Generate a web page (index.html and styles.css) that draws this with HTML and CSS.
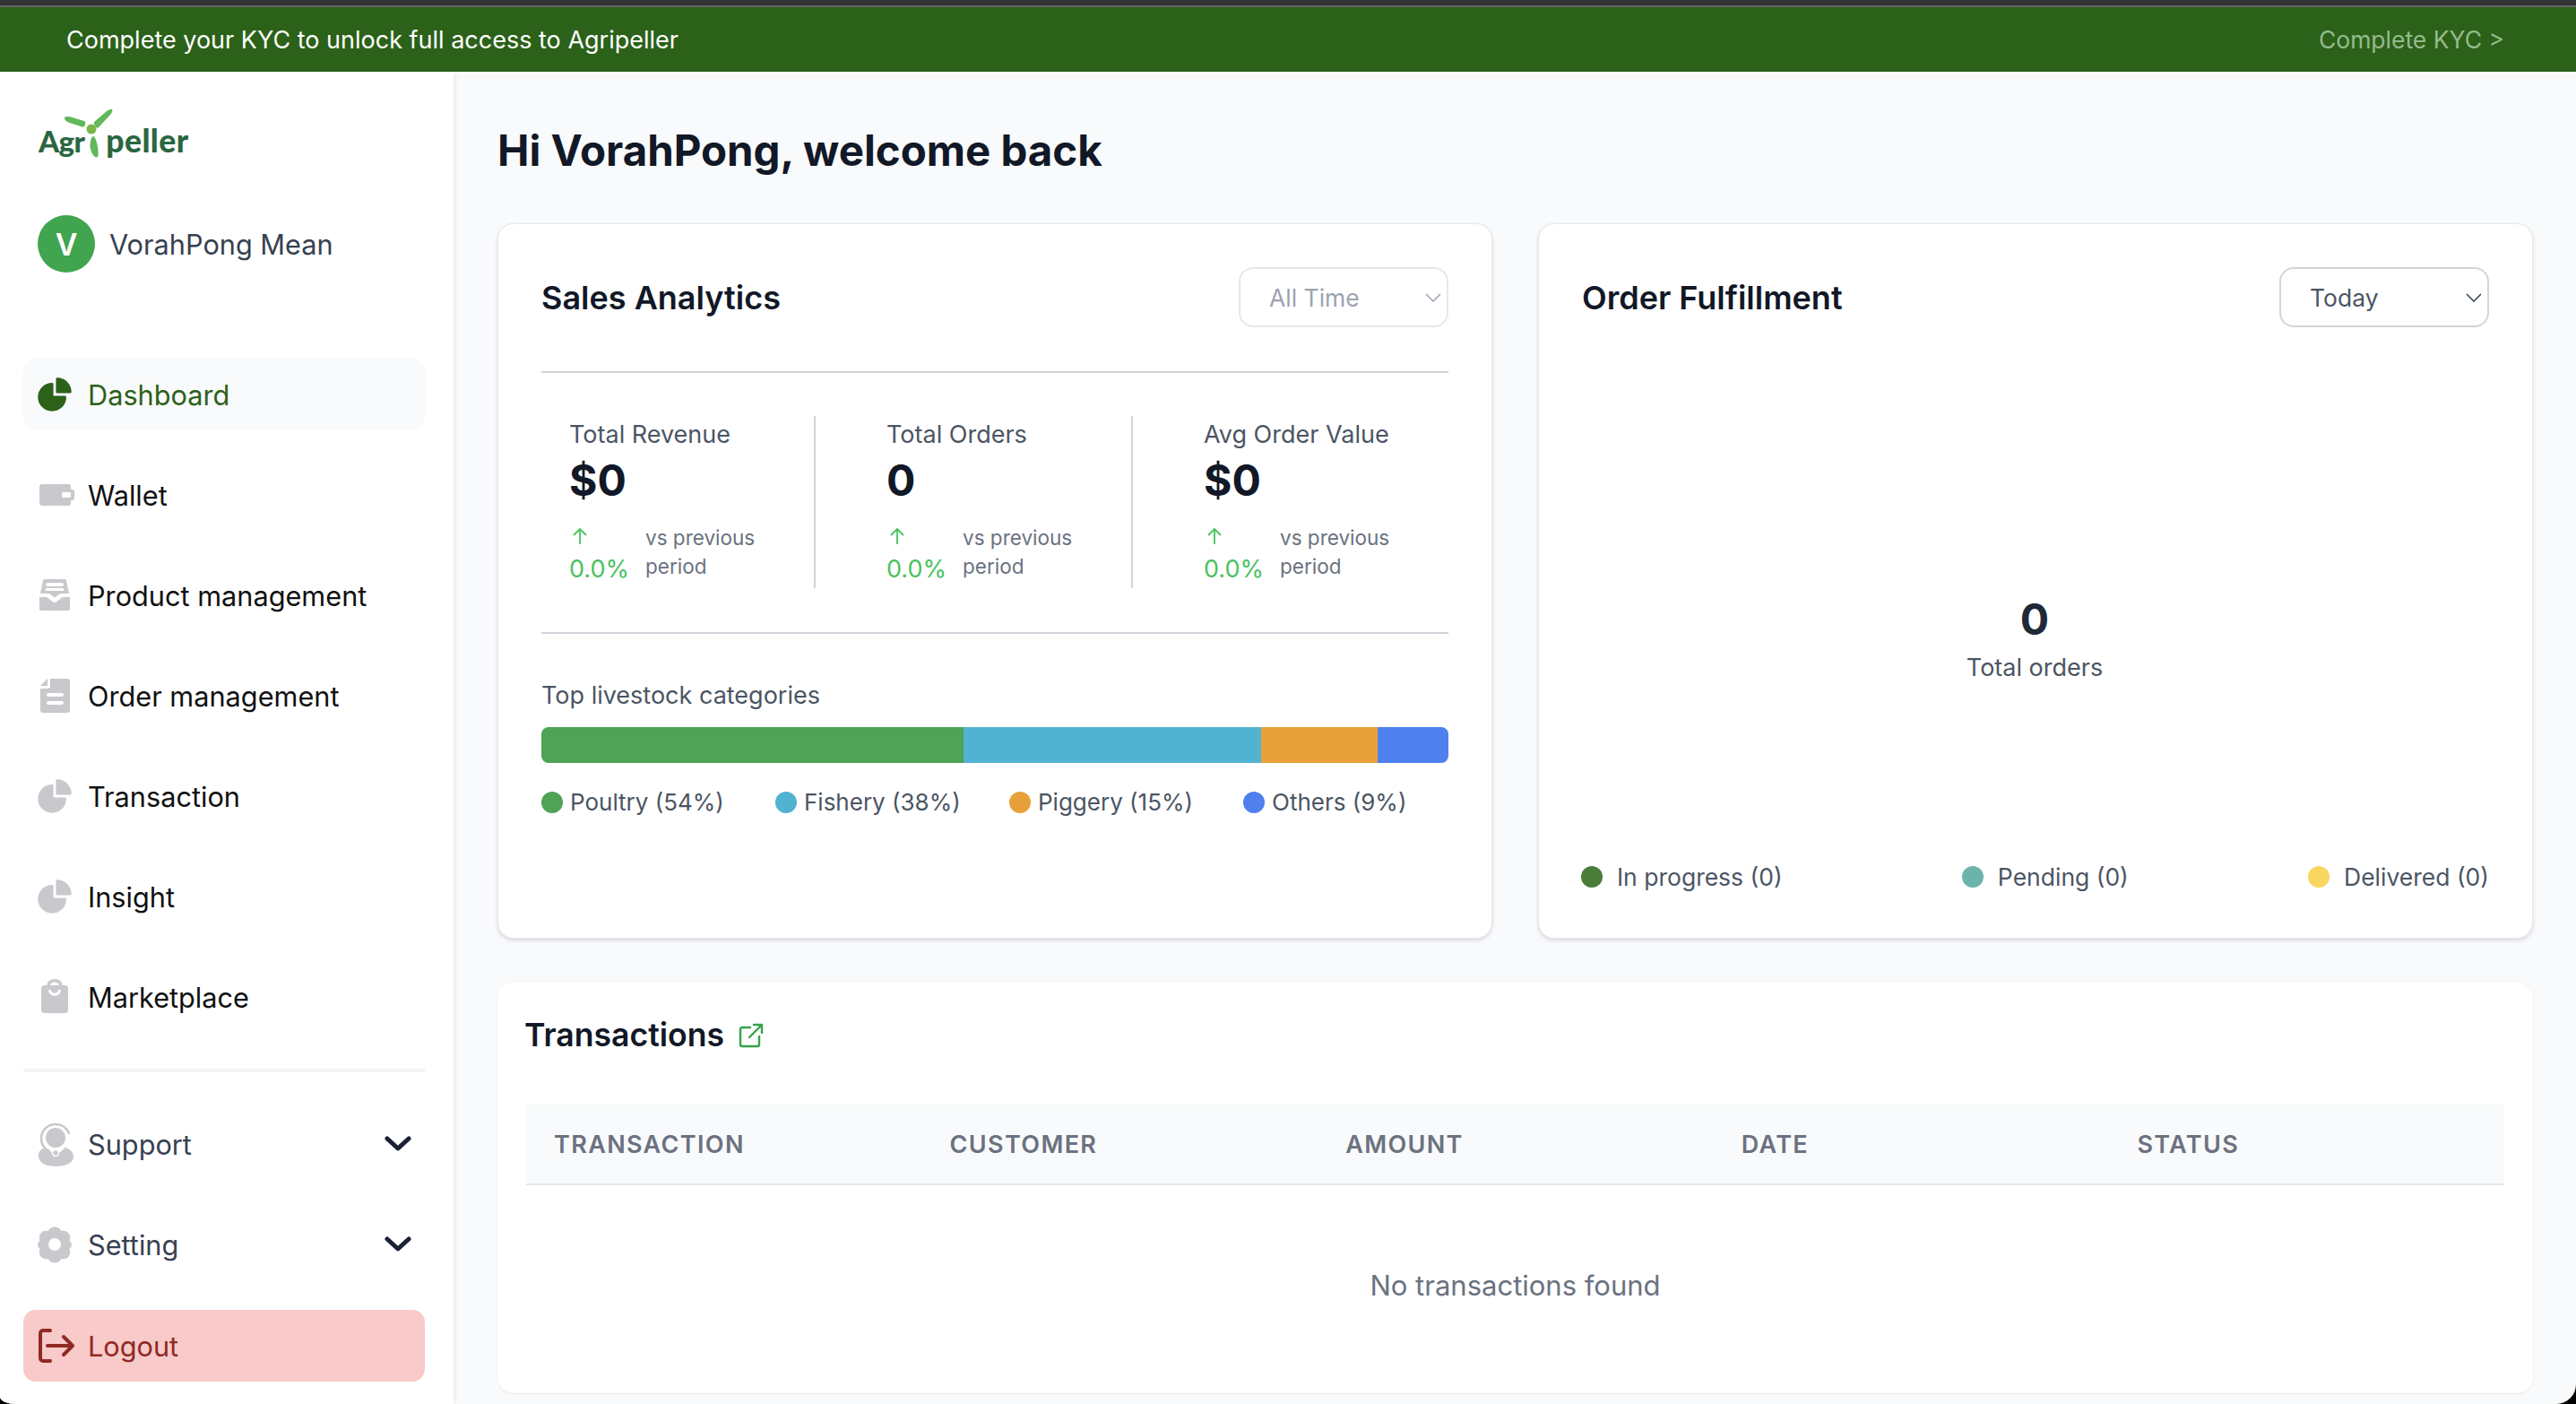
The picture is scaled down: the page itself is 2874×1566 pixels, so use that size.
FILE: index.html
```html
<!DOCTYPE html>
<html lang="en">
<head>
<meta charset="utf-8">
<title>Agripeller Dashboard</title>
<link rel="stylesheet" href="styles.css">
</head>
<body>
<div class="app">
  <div class="chrome"></div>
  <div class="banner">
    <span>Complete your KYC to unlock full access to Agripeller</span>
    <span class="banner-link">Complete KYC &gt;</span>
  </div>
  <div class="layout">
    <aside class="sidebar">
      <div class="logo">
        <span class="logo-start">Agr</span><span class="logo-gap"></span><span>peller</span>
        <svg class="logo-mill" width="70" height="64" viewBox="0 0 70 64">
          <path d="M5 14.500C4 12 8 11.500 12 12.500L27 17C28 17 28.500 18 28 21C27 23.500 26 24 24.500 23.500L11 19C8 18 6 17 5 14.500Z" fill="#62b85a"/>
          <path d="M38 18L52 6C54 4.500 57 3 58 4C59 5 58 8 56 10L43 24C42 25 41 25 40 23.500C38.500 21.500 37 19.500 38 18Z" fill="#62b85a"/>
          <path d="M37 34C39 34 41 40 42 46C43 52 43 57 41 57.500C38 58 34.500 52 33.500 46C33 41 35 34 37 34Z" fill="#62b85a"/>
          <circle cx="35" cy="26" r="5.500" fill="#7ab648"/>
        </svg>
      </div>
      <div class="user">
        <div class="avatar">V</div>
        <span class="user-name">VorahPong Mean</span>
      </div>
      <nav class="nav">
        <a class="nav-item active">
          <svg class="nav-icon" viewBox="0 0 24 24"><path d="M2.250 13.500a8.250 8.250 0 0 1 8.250-8.250.75.75 0 0 1 .75.75v6.750H18a.75.75 0 0 1 .75.75 8.250 8.250 0 0 1-16.500 0Z"/><path d="M12.750 3a.75.75 0 0 1 .75-.75 8.250 8.250 0 0 1 8.250 8.250.75.75 0 0 1-.75.75h-7.500a.75.75 0 0 1-.75-.75V3Z"/></svg>
          <span>Dashboard</span>
        </a>
        <a class="nav-item">
          <svg class="nav-icon" viewBox="0 0 46 46"><path fill-rule="evenodd" d="M9 11h29a3 3 0 0 1 3 3v3h1a3 3 0 0 1 3 3v6a3 3 0 0 1-3 3h-1v3a3 3 0 0 1-3 3H9a3 3 0 0 1-3-3V14a3 3 0 0 1 3-3ZM32 20a1 1 0 0 0-1 1v4a1 1 0 0 0 1 1h8a1 1 0 0 0 1-1v-4a1 1 0 0 0-1-1Z"/></svg>
          <span>Wallet</span>
        </a>
        <a class="nav-item">
          <svg class="nav-icon" viewBox="0 0 46 46"><path fill-rule="evenodd" d="M12 5h22a2 2 0 0 1 2 1.500L39 21h-9c-1 0-2 .5-3 1.500l-4 3-4-3c-1-1-2-1.500-3-1.500H7L10 6.500A2 2 0 0 1 12 5ZM15 9a2 2 0 0 0 0 4h16a2 2 0 0 0 0-4ZM14 15a1.500 1.500 0 0 0 0 3h18a1.500 1.500 0 0 0 0-3Z"/><path d="M6 25h8l8 6h2l8-6h8v13a2 2 0 0 1-2 2H8a2 2 0 0 1-2-2Z"/></svg>
          <span>Product management</span>
        </a>
        <a class="nav-item">
          <svg class="nav-icon" viewBox="0 0 46 46"><path d="M7 12L15 4v8Z"/><path fill-rule="evenodd" d="M18 4h19a3 3 0 0 1 3 3v32a3 3 0 0 1-3 3H10a3 3 0 0 1-3-3V15h8a3 3 0 0 0 3-3ZM16 20a2 2 0 0 0 0 4h15a2 2 0 0 0 0-4ZM16 29a2 2 0 0 0 0 4h15a2 2 0 0 0 0-4Z"/></svg>
          <span>Order management</span>
        </a>
        <a class="nav-item">
          <svg class="nav-icon" viewBox="0 0 24 24"><path d="M2.250 13.500a8.250 8.250 0 0 1 8.250-8.250.75.75 0 0 1 .75.75v6.750H18a.75.75 0 0 1 .75.75 8.250 8.250 0 0 1-16.500 0Z"/><path d="M12.750 3a.75.75 0 0 1 .75-.75 8.250 8.250 0 0 1 8.250 8.250.75.75 0 0 1-.75.75h-7.500a.75.75 0 0 1-.75-.75V3Z"/></svg>
          <span>Transaction</span>
        </a>
        <a class="nav-item">
          <svg class="nav-icon" viewBox="0 0 24 24"><path d="M2.250 13.500a8.250 8.250 0 0 1 8.250-8.250.75.75 0 0 1 .75.75v6.750H18a.75.75 0 0 1 .75.75 8.250 8.250 0 0 1-16.500 0Z"/><path d="M12.750 3a.75.75 0 0 1 .75-.75 8.250 8.250 0 0 1 8.250 8.250.75.75 0 0 1-.75.75h-7.500a.75.75 0 0 1-.75-.75V3Z"/></svg>
          <span>Insight</span>
        </a>
        <a class="nav-item">
          <svg class="nav-icon" viewBox="0 0 46 46"><path fill-rule="evenodd" d="M12 10h2.500C15 5 18.500 3 23 3s8 2 8.500 7H34a4 4 0 0 1 4 4v23a4 4 0 0 1-4 4H12a4 4 0 0 1-4-4V14a4 4 0 0 1 4-4ZM18 10h10c-.5-2.500-2.500-3.500-5-3.500s-4.500 1-5 3.500ZM16 15c0 9 14 9 14 0h-3c-.5 5-7.500 5-8 0Z"/></svg>
          <span>Marketplace</span>
        </a>
      </nav>
      <div class="side-rule"></div>
      <nav class="nav">
        <a class="nav-item muted">
          <svg class="nav-icon tall" viewBox="0 0 46 54"><path fill="none" stroke="#c8c8cd" stroke-width="2.500" stroke-linecap="round" d="M39 15C36 8 31 5 24 5C15 5 8 12 8 21C8 27 11 32 17 35"/><circle cx="24" cy="20" r="11"/><path d="M5 40C5 35 8 32 13 31C16 35 20 37 24 37C28 37 31 36 34 31C40 32 44 36 44 41C44 48 35 52 24 52C13 52 5 48 5 40Z"/><circle cx="24" cy="37" r="3.500" stroke="#fff" stroke-width="1.500"/></svg>
          <span>Support</span>
          <svg class="chev" width="30" height="18" viewBox="0 0 30 18"><path d="M3 3l12 11L27 3" fill="none" stroke="#1a2233" stroke-width="5" stroke-linecap="round" stroke-linejoin="round"/></svg>
        </a>
        <a class="nav-item muted">
          <svg class="nav-icon" viewBox="0 0 46 46"><path fill-rule="evenodd" d="M23 3.500c3.500 0 6 2 7.500 4.500 3-.5 6 0 8 2.500s2 5.500 1 8.500c2 2 2.500 3 2.500 4.500s-.5 2.500-2.500 4.500c1 3 1 6-1 8.500s-5 3-8 2.500c-1.500 2.500-4 4.500-7.500 4.500s-6-2-7.500-4.500c-3 .5-6 0-8-2.500s-2-5.500-1-8.500C4.500 26 4 25 4 23.500s.5-2.500 2.500-4.500c-1-3-1-6 1-8.500s5-3 8-2.500c1.500-2.500 4-4.500 7.500-4.500ZM23 16a7 7 0 1 0 0 14 7 7 0 0 0 0-14Z"/></svg>
          <span>Setting</span>
          <svg class="chev" width="30" height="18" viewBox="0 0 30 18"><path d="M3 3l12 11L27 3" fill="none" stroke="#1a2233" stroke-width="5" stroke-linecap="round" stroke-linejoin="round"/></svg>
        </a>
        <a class="nav-item logout">
          <svg class="nav-icon" viewBox="0 0 46 46"><path d="M18 6H10a3 3 0 0 0-3 3v28a3 3 0 0 0 3 3h8M15 23h28M33 13l10 10-10 10" fill="none" stroke="#8f2a24" stroke-width="4" stroke-linecap="round" stroke-linejoin="round"/></svg>
          <span>Logout</span>
        </a>
      </nav>
    </aside>
    <main class="main">
      <h1 class="greeting">Hi VorahPong, welcome back</h1>
      <div class="cards">
        <section class="card">
          <header class="card-head ruled">
            <h2 class="card-title">Sales Analytics</h2>
            <div class="select disabled"><span>All Time</span><svg width="18" height="10" viewBox="0 0 18 10"><path d="M1 1l8 8 8-8" fill="none" stroke="#9ca3af" stroke-width="1.500"/></svg></div>
          </header>
          <div class="stats">
            <div class="stat">
              <div class="stat-label">Total Revenue</div>
              <div class="stat-value">$0</div>
              <div class="stat-change">
                <div class="change-num">
                  <svg width="18" height="20" viewBox="0 0 18 20"><path d="M9 19V2M2 9l7-7 7 7" fill="none" stroke="#4ac25f" stroke-width="1.800"/></svg>
                  <span>0.0%</span>
                </div>
                <span class="change-note">vs previous period</span>
              </div>
            </div>
            <div class="stat">
              <div class="stat-label">Total Orders</div>
              <div class="stat-value">0</div>
              <div class="stat-change">
                <div class="change-num">
                  <svg width="18" height="20" viewBox="0 0 18 20"><path d="M9 19V2M2 9l7-7 7 7" fill="none" stroke="#4ac25f" stroke-width="1.800"/></svg>
                  <span>0.0%</span>
                </div>
                <span class="change-note">vs previous period</span>
              </div>
            </div>
            <div class="stat">
              <div class="stat-label">Avg Order Value</div>
              <div class="stat-value">$0</div>
              <div class="stat-change">
                <div class="change-num">
                  <svg width="18" height="20" viewBox="0 0 18 20"><path d="M9 19V2M2 9l7-7 7 7" fill="none" stroke="#4ac25f" stroke-width="1.800"/></svg>
                  <span>0.0%</span>
                </div>
                <span class="change-note">vs previous period</span>
              </div>
            </div>
          </div>
          <div class="categories">
            <div class="cat-title">Top livestock categories</div>
            <div class="bar">
              <div class="seg c-green" style="width:471px"></div>
              <div class="seg c-cyan" style="width:332px"></div>
              <div class="seg c-orange" style="width:130px"></div>
              <div class="seg c-blue" style="width:79px"></div>
            </div>
            <ul class="legend">
              <li><i class="dot c-green"></i>Poultry (54%)</li>
              <li><i class="dot c-cyan"></i>Fishery (38%)</li>
              <li><i class="dot c-orange"></i>Piggery (15%)</li>
              <li><i class="dot c-blue"></i>Others (9%)</li>
            </ul>
          </div>
        </section>
        <section class="card">
          <header class="card-head">
            <h2 class="card-title">Order Fulfillment</h2>
            <div class="select"><span>Today</span><svg width="18" height="10" viewBox="0 0 18 10"><path d="M1 1l8 8 8-8" fill="none" stroke="#374151" stroke-width="1.500"/></svg></div>
          </header>
          <div class="orders">
            <div class="orders-num">0</div>
            <div class="orders-label">Total orders</div>
          </div>
          <ul class="order-legend">
            <li><i class="dot c-moss"></i>In progress (0)</li>
            <li><i class="dot c-teal"></i>Pending (0)</li>
            <li><i class="dot c-yellow"></i>Delivered (0)</li>
          </ul>
        </section>
      </div>
      <section class="card-flat">
        <div class="tx-head">
          <h2 class="card-title">Transactions</h2>
          <svg width="28" height="28" viewBox="0 0 28 28"><path d="M13 5H4a2 2 0 0 0-2 2v17a2 2 0 0 0 2 2h17a2 2 0 0 0 2-2v-9M12 16L26 2M17 2h9v9" fill="none" stroke="#37a34a" stroke-width="2.400" stroke-linecap="round" stroke-linejoin="round"/></svg>
        </div>
        <div class="table-head">
          <div>Transaction</div><div>Customer</div><div>Amount</div><div>Date</div><div>Status</div>
        </div>
        <div class="empty">No transactions found</div>
      </section>
    </main>
  </div>
</div>
</body>
</html>
```

FILE: styles.css
```css
* { box-sizing: border-box; margin: 0; padding: 0; }
html, body { width: 2874px; height: 1566px; overflow: hidden; background: #000; }
body { font-family: Inter, "Liberation Sans", sans-serif; color: #111827; }
.app { width: 2874px; height: 1566px; display: flex; flex-direction: column; overflow: hidden; background: #f9fafb; border-radius: 0 0 22px 18px / 0 0 22px 8px; }
.chrome { height: 8px; flex: none; background: #333; border-bottom: 2px solid #666; }
.banner { height: 72px; flex: none; display: flex; align-items: center; justify-content: space-between; padding: 0 80px 0 74px; background: #2b6119; color: #fff; font-size: 27px; }
.banner-link { color: #96ba8b; font-size: 26.500px; }
.layout { flex: 1; display: flex; min-height: 0; }
.sidebar { width: 506px; flex: none; background: #fff; padding: 40px 32px 0 26px; box-shadow: 2px 0 4px rgba(17,24,39,.06); position: relative; }
.logo { position: relative; height: 59px; display: flex; align-items: flex-end; padding-left: 17px; font-family: Lato, sans-serif; font-weight: 900; font-size: 35.500px; line-height: 44px; letter-spacing: .4px; color: #2a6640; margin-bottom: -3px; }
.logo-start { font-size: 33px; letter-spacing: -.6px; }
.logo-gap { width: 24px; }
.logo-mill { position: absolute; left: 41px; top: -2px; }
.user { display: flex; align-items: center; gap: 16px; margin: 64px 0 0 16px; }
.avatar { width: 64px; height: 64px; border-radius: 50%; background: #41a44f; color: #fff; display: flex; align-items: center; justify-content: center; font-size: 34px; font-weight: 600; }
.user-name { font-size: 30.700px; color: #374151; }
.nav { display: flex; flex-direction: column; gap: 32px; }
.user + .nav { margin-top: 96px; }
.nav-item { height: 80px; display: flex; align-items: center; gap: 14px; padding: 0 12px; border-radius: 14px; font-size: 30.700px; color: #111; }
.nav-icon { width: 46px; height: 46px; flex: none; fill: #c8c8cd; }
.nav-icon.tall { height: 54px; }
.nav-item.active { background: #f9fafb; color: #2b6119; }
.nav-item.active .nav-icon { fill: #2b6119; }
.nav-item.muted { color: #374151; }
.chev { margin-left: auto; margin-right: 3px; }
.nav-item.logout { background: #f8caca; color: #8f2a24; margin-top: 1px; }
.side-rule { height: 4px; background: #f3f4f6; margin: 40px 0; }
.main { flex: 1; min-width: 0; padding: 56px 48px 0 49px; overflow: hidden; }
.greeting { font-size: 47.400px; line-height: 64px; font-weight: 700; color: #111827; margin-bottom: 49px; }
.cards { display: grid; grid-template-columns: 1110px 1110px; justify-content: space-between; }
.card { height: 798px; background: #fff; border: 1px solid #e5e7eb; border-radius: 18px; padding: 48px 48px 0; box-shadow: 0 2px 4px rgba(17,24,39,.14); display: flex; flex-direction: column; }
.card-head { display: flex; align-items: center; justify-content: space-between; flex: none; }
.card-head.ruled { padding-bottom: 49px; border-bottom: 2px solid #d1d5db; }
.card-title { font-size: 36px; font-weight: 600; line-height: 48px; color: #111827; }
.select { width: 234px; height: 67px; display: flex; align-items: center; justify-content: space-between; padding: 0 6px 0 32px; border: 2px solid #d1d5db; border-radius: 16px; font-size: 26.500px; color: #4b5563; }
.select.disabled { border-color: #e5e7eb; color: #9ca3af; }
.stats { display: flex; margin-top: 48px; height: 192px; }
.stat { width: 354px; padding-left: 79px; border-left: 2px solid #d1d5db; }
.stat:first-child { width: 304px; padding-left: 31px; border-left: 0; }
.stat-label { font-size: 27px; line-height: 42px; color: #4b5563; }
.stat-value { font-size: 48px; line-height: 60px; font-weight: 700; color: #111827; margin-bottom: 18px; }
.stat-change { display: flex; align-items: flex-start; gap: 19px; }
.change-num { width: 66px; flex: none; display: flex; flex-direction: column; align-items: flex-start; font-size: 27px; line-height: 36px; color: #4ac25f; }
.change-num svg { margin: 4px 0 9px 3px; }
.change-note { width: 140px; font-size: 22.500px; line-height: 32px; color: #6b7280; }
.categories { margin-top: 49px; border-top: 2px solid #d1d5db; padding-top: 49px; }
.cat-title { font-size: 27px; line-height: 40px; color: #4b5563; }
.bar { display: flex; height: 40px; margin-top: 15px; border-radius: 8px; overflow: hidden; }
.seg { height: 100%; }
.c-green { background: #4ea356; }
.c-cyan { background: #52b2d2; }
.c-orange { background: #e8a13a; }
.c-blue { background: #4f80ed; }
.c-moss { background: #4a7c3a; }
.c-teal { background: #6cb4ab; }
.c-yellow { background: #f9d65f; }
.dot { display: block; width: 24px; height: 24px; border-radius: 50%; flex: none; }
.legend { list-style: none; display: flex; margin-top: 24px; }
.legend li { width: 261px; flex: none; display: flex; align-items: center; gap: 8px; font-size: 26px; line-height: 40px; color: #4b5563; white-space: nowrap; }
.orders { height: 593px; padding-top: 296px; text-align: center; flex: none; margin-left: -2px; }
.orders-num { font-size: 48px; line-height: 60px; font-weight: 700; color: #1f2937; }
.orders-label { font-size: 27px; line-height: 46px; color: #4b5563; margin-top: -7px; padding-top: 8px; }
.order-legend { list-style: none; display: flex; justify-content: space-between; margin-left: -1px; }
.order-legend li { display: flex; align-items: center; gap: 16px; font-size: 26.500px; line-height: 40px; color: #4b5563; }
.card-flat { margin-top: 49px; height: 458px; background: #fff; border-radius: 18px; padding: 32px 32px 0; box-shadow: 0 1px 2px rgba(17,24,39,.08); }
.tx-head { display: flex; align-items: center; gap: 16px; height: 54px; margin-left: -2px; }
.tx-head .card-title { font-size: 35.600px; }
.table-head { display: grid; grid-template-columns: repeat(5, 441.6px); height: 90px; margin-top: 50px; align-items: center; background: #f9fafb; border-bottom: 2px solid #e5e7eb; font-size: 27px; font-weight: 600; letter-spacing: 1.350px; text-transform: uppercase; color: #6b7280; }
.table-head > div { padding-left: 31px; }
.empty { text-align: center; font-size: 31px; line-height: 40px; color: #6b7280; margin-top: 92px; }
```
